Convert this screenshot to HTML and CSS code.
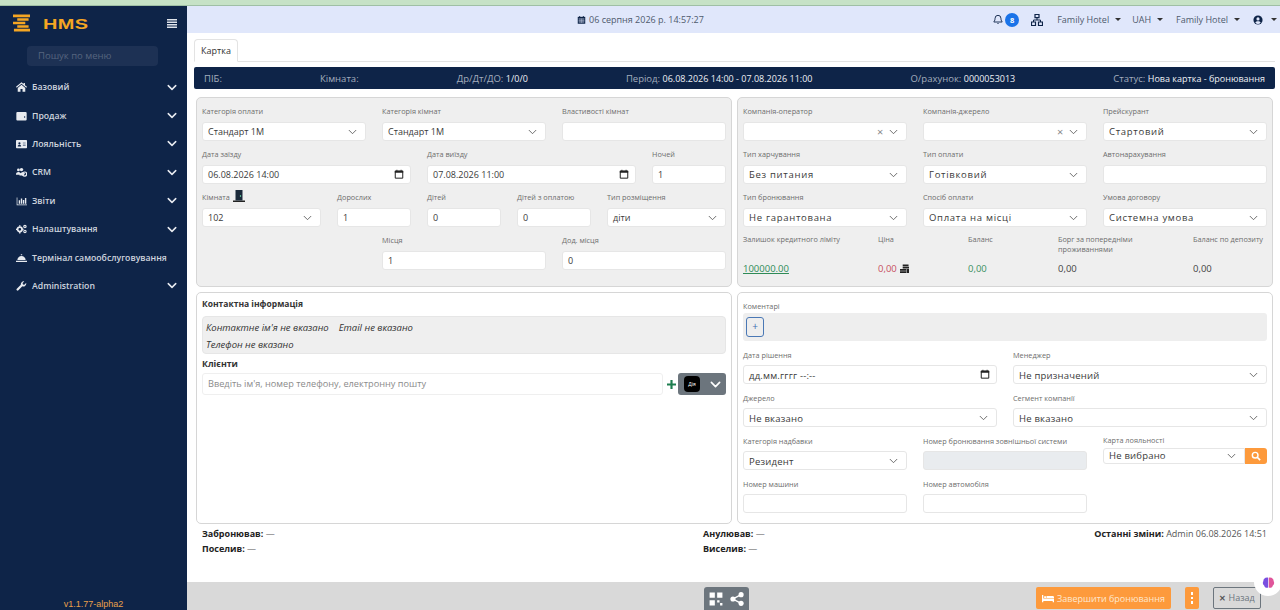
FILE: index.html
```html
<!DOCTYPE html>
<html lang="uk">
<head>
<meta charset="utf-8">
<title>HMS</title>
<link rel="stylesheet" href="styles.css">
</head>
<body>
<svg class="defs" width="0" height="0" aria-hidden="true">
  <symbol id="chev" viewBox="0 0 16 10"><path d="M2 2l6 6 6-6" fill="none" stroke="currentColor" stroke-linecap="round" stroke-linejoin="round"/></symbol>
  <symbol id="cal" viewBox="0 0 12 12"><path d="M1.500 2.500h9v8.500h-9z" fill="none" stroke="currentColor" stroke-width="1.200"/><path d="M1 2h10v2.500H1zM3 1h1v2H3zM8 1h1v2H8z" fill="currentColor"/></symbol>
</svg>
<div class="strip"></div>
<div class="app">
  <aside class="side">
    <div class="brand">
      <svg class="brand-mark" viewBox="0 0 18 19"><path d="M0 .5h18v3H0zM4.500 4.500h12v2.500h-12zM0 8.200h13v2.600H0zM4.500 12h12v2.500h-12zM1 15.500h17v3H1z" fill="#f5a623"/></svg>
      <span class="brand-name">HMS</span>
      <svg class="burger" viewBox="0 0 10 9"><path d="M0 0h10v1.500H0zM0 2.500h10V4H0zM0 5h10v1.500H0zM0 7.500h10V9H0z" fill="#dfe3ea"/></svg>
    </div>
    <div class="menu-search">Пошук по меню</div>
    <nav class="nav">
      <a class="nav-item"><svg class="nav-ic" viewBox="0 0 16 14"><path d="M8 0L0 6.800l1 1.200L8 2.200 15 8l1-1.200-3-2.500V1h-2v1.600zM2.500 8.500V14h4V10h3v4h4V8.500L8 3.800z" fill="currentColor"/></svg><span>Базовий</span><svg class="nav-chev"><use href="#chev"/></svg></a>
      <a class="nav-item"><svg class="nav-ic" viewBox="0 0 16 14"><path d="M2 1h12a1.500 1.500 0 0 1 1.500 1.500V12a1.500 1.500 0 0 1-1.500 1.500H2A1.500 1.500 0 0 1 .5 12V2.500A1.500 1.500 0 0 1 2 1z" fill="currentColor"/><circle cx="12.500" cy="8.500" r="1" fill="#0e2448"/></svg><span>Продаж</span><svg class="nav-chev"><use href="#chev"/></svg></a>
      <a class="nav-item"><svg class="nav-ic" viewBox="0 0 16 14"><path d="M1 1h14a1 1 0 0 1 1 1v10a1 1 0 0 1-1 1H1a1 1 0 0 1-1-1V2a1 1 0 0 1 1-1z" fill="currentColor"/><circle cx="5" cy="6" r="1.600" fill="#0e2448"/><path d="M2.500 10.500c0-3 5-3 5 0zM10 5h4v1h-4zM10 8h4v1h-4z" fill="#0e2448"/></svg><span>Лояльність</span><svg class="nav-chev"><use href="#chev"/></svg></a>
      <a class="nav-item"><svg class="nav-ic" viewBox="0 0 16 14"><circle cx="3.500" cy="4" r="2" fill="currentColor"/><circle cx="8" cy="3.500" r="2.500" fill="currentColor"/><path d="M0 10c0-3.500 5-4 6-2v3H0zM5 12c0-5 7-6 8-3l-2 3z" fill="currentColor"/><circle cx="12.500" cy="10" r="3" fill="none" stroke="currentColor" stroke-width="1.800"/></svg><span>CRM</span><svg class="nav-chev"><use href="#chev"/></svg></a>
      <a class="nav-item"><svg class="nav-ic" viewBox="0 0 16 14"><path d="M1 2h1v10h14v1.200H1zM4 6h2v5H4zM7 3.500h2V11H7zM10 5.500h2V11h-2zM13 2.500h2V11h-2z" fill="currentColor"/></svg><span>Звіти</span><svg class="nav-chev"><use href="#chev"/></svg></a>
      <a class="nav-item"><svg class="nav-ic" viewBox="0 0 16 14"><circle cx="5.500" cy="7.500" r="3.300" fill="none" stroke="currentColor" stroke-width="2.600"/><path d="M4.500 1.500h2v2h-2zM4.500 11.500h2v2h-2zM0 6.500h2v2H0zM9 6.500h2v2H9z" fill="currentColor"/><circle cx="13" cy="3.500" r="1.700" fill="none" stroke="currentColor" stroke-width="1.700"/><circle cx="13" cy="10.500" r="1.700" fill="none" stroke="currentColor" stroke-width="1.700"/></svg><span>Налаштування</span><svg class="nav-chev"><use href="#chev"/></svg></a>
      <a class="nav-item"><svg class="nav-ic" viewBox="0 0 16 14"><path d="M7 1.500h2V3H7zM2 10a6 6 0 0 1 12 0zM0 11h16v1.800H0z" fill="currentColor"/></svg><span>Термінал самообслуговування</span></a>
      <a class="nav-item"><svg class="nav-ic" viewBox="0 0 16 14"><path d="M15 3.500a4.300 4.300 0 0 1-5.800 4L3.500 13.200a1.600 1.600 0 0 1-2.300-2.300L7 5.200A4.300 4.300 0 0 1 12 .3L9.600 2.700l.5 2 2 .5L14.600 2.700a4 4 0 0 1 .4.800z" fill="currentColor"/></svg><span>Administration</span><svg class="nav-chev"><use href="#chev"/></svg></a>
    </nav>
    <div class="version">v1.1.77-alpha2</div>
  </aside>

  <main class="main">
    <header class="topbar">
      <div class="clock"><svg class="ic-cal" viewBox="0 0 12 12"><path d="M1 1.800h10V11H1z" fill="#0e2448"/><path d="M3 .5h1.200v2H3zM7.800.5H9v2H7.800z" fill="#0e2448"/><path d="M2 4.500h8M2 6.500h8M2 8.500h8M4 4v6M6 4v6M8 4v6" stroke="#e0e7fb" stroke-width=".6"/></svg>06 серпня 2026 р. 14:57:27</div>
      <div class="top-right">
        <svg class="ic-bell" viewBox="0 0 12 12"><path d="M6 1a3.500 3.500 0 0 0-3.500 3.500c0 3-1.500 4-1.500 4.500h10c0-.5-1.500-1.500-1.500-4.500A3.500 3.500 0 0 0 6 1z" fill="none" stroke="#0e2448" stroke-width="1.100"/><path d="M4.700 10.200a1.400 1.400 0 0 0 2.600 0z" fill="#0e2448"/></svg>
        <span class="badge">8</span>
        <svg class="ic-net" viewBox="0 0 12 12"><path d="M4 .5h4v3.200H4zM.5 8h4v3.500h-4zM7.500 8h4v3.500h-4z" fill="none" stroke="#0e2448" stroke-width="1.200"/><path d="M6 3.700V6M2.500 8V6h7v2" fill="none" stroke="#0e2448"/></svg>
        <span class="top-item caret first">Family Hotel</span>
        <span class="top-item caret uah">UAH</span>
        <span class="top-item caret">Family Hotel</span>
        <span class="top-user caret"><svg class="ic-user" viewBox="0 0 12 12"><circle cx="6" cy="6" r="5.500" fill="#0e2448"/><circle cx="6" cy="4.700" r="1.900" fill="#e0e7fb"/><path d="M2.800 9.300c1-2.300 5.400-2.300 6.400 0a4.500 4.500 0 0 1-6.400 0z" fill="#e0e7fb"/></svg></span>
      </div>
    </header>

    <div class="tabs"><span class="tab">Картка</span></div>

    <div class="summary">
      <span>ПІБ:</span>
      <span>Кімната:</span>
      <span>Др/Дт/ДО: <b>1/0/0</b></span>
      <span>Період: <b>06.08.2026 14:00 - 07.08.2026 11:00</b></span>
      <span>О/рахунок: <b>0000053013</b></span>
      <span>Статус: <b>Нова картка - бронювання</b></span>
    </div>

    <div class="panels">
      <section class="panel gray form-grid stay">
        <div class="field s4"><label>Категорія оплати</label><div class="ctl">Стандарт 1М<svg class="chev"><use href="#chev"/></svg></div></div>
        <div class="field s4"><label>Категорія кімнат</label><div class="ctl">Стандарт 1М<svg class="chev"><use href="#chev"/></svg></div></div>
        <div class="field s4"><label>Властивості кімнат</label><div class="ctl"></div></div>
        <div class="field s5"><label>Дата заїзду</label><div class="ctl">06.08.2026 14:00<svg class="cal"><use href="#cal"/></svg></div></div>
        <div class="field s5"><label>Дата виїзду</label><div class="ctl">07.08.2026 11:00<svg class="cal"><use href="#cal"/></svg></div></div>
        <div class="field s2"><label>Ночей</label><div class="ctl">1</div></div>
        <div class="field s3"><label>Кімната <svg class="door" viewBox="0 0 12 12"><path d="M0 10.500h12V12H0z" fill="#222"/><path d="M2.500 0h7v10.500h-7z" fill="#1b2a3a"/><circle cx="7.500" cy="6" r=".7" fill="#7fb"/></svg></label><div class="ctl">102<svg class="chev"><use href="#chev"/></svg></div></div>
        <div class="field s2"><label>Дорослих</label><div class="ctl">1</div></div>
        <div class="field s2"><label>Дітей</label><div class="ctl">0</div></div>
        <div class="field s2"><label>Дітей з оплатою</label><div class="ctl">0</div></div>
        <div class="field s3"><label>Тип розміщення</label><div class="ctl">діти<svg class="chev"><use href="#chev"/></svg></div></div>
        <div class="field s4 start5"><label>Місця</label><div class="ctl">1</div></div>
        <div class="field s4"><label>Дод. місця</label><div class="ctl">0</div></div>
      </section>

      <section class="panel gray form-grid terms">
        <div class="field s4"><label>Компанія-оператор</label><div class="ctl"><span class="clear">×</span><svg class="chev"><use href="#chev"/></svg></div></div>
        <div class="field s4"><label>Компанія-джерело</label><div class="ctl"><span class="clear">×</span><svg class="chev"><use href="#chev"/></svg></div></div>
        <div class="field s4"><label>Прейскурант</label><div class="ctl">Стартовий<svg class="chev"><use href="#chev"/></svg></div></div>
        <div class="field s4"><label>Тип харчування</label><div class="ctl">Без питания<svg class="chev"><use href="#chev"/></svg></div></div>
        <div class="field s4"><label>Тип оплати</label><div class="ctl">Готівковий<svg class="chev"><use href="#chev"/></svg></div></div>
        <div class="field s4"><label>Автонарахування</label><div class="ctl"></div></div>
        <div class="field s4"><label>Тип бронювання</label><div class="ctl">Не гарантована<svg class="chev"><use href="#chev"/></svg></div></div>
        <div class="field s4"><label>Спосіб оплати</label><div class="ctl">Оплата на місці<svg class="chev"><use href="#chev"/></svg></div></div>
        <div class="field s4"><label>Умова договору</label><div class="ctl">Системна умова<svg class="chev"><use href="#chev"/></svg></div></div>
        <div class="info s3"><label>Залишок кредитного ліміту</label><a class="val link">100000.00</a></div>
        <div class="info s2"><label>Ціна</label><span class="val red">0,00 <svg class="coins" viewBox="0 0 10 10"><path d="M3 .5h6.500v2H3zM3 3h7v2H3zM0 5.500h7v2H0zM0 8h7v2H0zM7.500 5.500H10V10H7.500z" fill="#222"/></svg></span></div>
        <div class="info s2"><label>Баланс</label><span class="val green">0,00</span></div>
        <div class="info s3"><label>Борг за попередніми проживаннями</label><span class="val">0,00</span></div>
        <div class="info s2"><label>Баланс по депозиту</label><span class="val">0,00</span></div>
      </section>

      <section class="panel contact">
        <h3 class="contact-title">Контактна інформація</h3>
        <div class="contact-box">
          <div class="contact-row"><span>Контактне ім'я не вказано</span><span>Email не вказано</span></div>
          <div class="contact-row"><span>Телефон не вказано</span></div>
        </div>
        <h3 class="clients-title">Клієнти</h3>
        <div class="client-row">
          <div class="client-input">Введіть ім'я, номер телефону, електронну пошту</div>
          <svg class="plus" viewBox="0 0 10 10"><path d="M3.800 0h2.400v3.800H10v2.400H6.200V10H3.800V6.200H0V3.800h3.800z" fill="#1e7e50"/></svg>
          <div class="diia"><span class="diia-logo">Дія</span><svg class="diia-chev"><use href="#chev"/></svg></div>
        </div>
      </section>

      <section class="panel extra">
        <label class="comment-label">Коментарі</label>
        <div class="comment-box"><span class="add">+</span></div>
        <div class="form-grid">
          <div class="field s6"><label>Дата рішення</label><div class="ctl">дд.мм.гггг --:--<svg class="cal"><use href="#cal"/></svg></div></div>
          <div class="field s6"><label>Менеджер</label><div class="ctl">Не призначений<svg class="chev"><use href="#chev"/></svg></div></div>
          <div class="field s6"><label>Джерело</label><div class="ctl">Не вказано<svg class="chev"><use href="#chev"/></svg></div></div>
          <div class="field s6"><label>Сегмент компанії</label><div class="ctl">Не вказано<svg class="chev"><use href="#chev"/></svg></div></div>
          <div class="field s4"><label>Категорія надбавки</label><div class="ctl">Резидент<svg class="chev"><use href="#chev"/></svg></div></div>
          <div class="field s4"><label>Номер бронювання зовнішньої системи</label><div class="ctl disabled"></div></div>
          <div class="field s4"><label class="short">Карта лояльності</label>
            <div class="loyal"><div class="ctl thin">Не вибрано<svg class="chev"><use href="#chev"/></svg></div><span class="search-btn"><svg viewBox="0 0 12 12"><circle cx="5" cy="5" r="3.400" fill="none" stroke="#fff" stroke-width="1.700"/><path d="M7.500 7.500l3.500 3.500" stroke="#fff" stroke-width="2"/></svg></span></div>
          </div>
          <div class="field s4"><label>Номер машини</label><div class="ctl"></div></div>
          <div class="field s4"><label>Номер автомобіля</label><div class="ctl"></div></div>
        </div>
      </section>
    </div>

    <div class="audit">
      <div class="audit-col first"><p><b>Забронював:</b> —</p><p><b>Поселив:</b> —</p></div>
      <div class="audit-col"><p><b>Анулював:</b> —</p><p><b>Виселив:</b> —</p></div>
      <div class="audit-col last"><p><b>Останні зміни:</b> Admin 06.08.2026 14:51</p></div>
    </div>

    <footer class="bottom">
      <div class="tools">
        <svg viewBox="0 0 12 12"><path d="M.5.500H5V5H.5zM7 .5h4.500V5H7zM.5 7H5v4.500H.5zM7 7h2v2H7zM9.500 9.500h2v2h-2z" fill="#fff"/></svg>
        <svg viewBox="0 0 12 12"><circle cx="9.500" cy="2.300" r="2.200" fill="#fff"/><circle cx="2.500" cy="6" r="2.200" fill="#fff"/><circle cx="9.500" cy="9.700" r="2.200" fill="#fff"/><path d="M9.500 2.300L2.500 6l7 3.700" fill="none" stroke="#fff" stroke-width="1.200"/></svg>
      </div>
      <span class="finish"><svg viewBox="0 0 14 10"><path d="M0 1h1.500v4H14v4.500h-1.500V8h-11v1.500H0zM2.500 2.500H5v2H2.500zM5.500 2h7A1.500 1.500 0 0 1 14 3.500v1H5.500z" fill="#fff"/></svg>Завершити бронювання</span>
      <span class="kebab"><i></i><i></i><i></i></span>
      <span class="back"><b>✕</b> Назад</span>
    </footer>
  </main>
</div>
<div class="brain"><svg viewBox="0 0 12 12"><path d="M5.700 1.500C3 .8 1 3 1.300 4.500.3 6 .8 8 2 8.700c.3 1.800 2.300 2.600 3.700 1.800z" fill="#7a4fe0"/><path d="M6.300 1.500c2.700-.7 4.700 1.500 4.400 3 1 1.500.5 3.500-.7 4.200-.3 1.800-2.300 2.600-3.700 1.800z" fill="#e0559a"/></svg></div>
</body>
</html>
```
FILE: styles.css
```css
* { box-sizing: border-box; }
html, body { margin: 0; padding: 0; height: 100%; overflow: hidden; }
body {
  font-family: "Open Sans", "Liberation Sans", sans-serif;
  font-size: 10px;
  color: #333;
  background: #fff;
  display: flex;
  flex-direction: column;
}
.defs { position: absolute; }
.strip { height: 6px; background: #c6e2c6; border-bottom: 1px solid #9fbfa5; flex: none; }
.app { flex: 1; display: flex; min-height: 0; }

/* sidebar */
.side { width: 187px; flex: none; background: #0e2448; color: #d4d9e2; display: flex; flex-direction: column; }
.brand { display: flex; align-items: center; height: 34px; padding-left: 13px; }
.brand-mark { width: 17px; height: 18px; }
.brand-name { margin-left: 13px; font-family: "Liberation Sans", sans-serif; font-weight: 700; font-size: 15px; color: #f5a623; width: 60px; letter-spacing: .3px; transform: scaleX(1.33); transform-origin: left center; }
.burger { width: 10px; height: 9px; margin-left: auto; margin-right: 10px; }
.menu-search { margin: 6px 29px 0 27px; height: 20px; border-radius: 4px; background: #1d3154; color: #56657f; font-size: 9.500px; line-height: 20px; padding-left: 11px; }
.nav { margin-top: 7px; display: flex; flex-direction: column; }
.nav-item { height: 28.400px; display: flex; align-items: center; padding-left: 16px; font-size: 8.700px; color: #cfd5df; font-weight: 600; white-space: nowrap; }
.nav-ic { width: 11px; height: 10px; margin-right: 5px; color: #e8ebf0; flex: none; }
.nav-chev { width: 10px; height: 7px; margin-left: auto; margin-right: 10px; color: #e8ebf0; stroke-width: 2.400; }
.version { margin-top: auto; text-align: center; font-family: "Liberation Sans", sans-serif; color: #eaa04b; font-size: 9px; line-height: 12px; }

/* main column */
.main { flex: 1; min-width: 0; display: flex; flex-direction: column; }
.topbar { height: 27px; background: #e0e7fb; display: flex; align-items: center; flex: none; color: #4e5a6d; font-size: 9px; }
.clock { margin-left: 390px; display: flex; align-items: center; gap: 3px; }
.ic-cal { width: 9px; height: 10px; }
.top-right { margin-left: auto; display: flex; align-items: center; padding-right: 3px; }
.ic-bell { width: 10px; height: 11px; }
.badge { margin-left: 2px; width: 14px; height: 14px; border-radius: 50%; background: #1a73e8; color: #fff; font-size: 7.500px; font-weight: 700; line-height: 14px; text-align: center; }
.ic-net { width: 12px; height: 12px; margin-left: 12px; }
.top-item { margin-left: 13px; }
.top-item.first { margin-left: 14px; }
.top-item.uah { margin-left: 11px; }
.caret { display: inline-flex; align-items: center; }
.caret::after { content: ""; margin-left: 6px; border-top: 3.500px solid #333; border-left: 3px solid transparent; border-right: 3px solid transparent; }
.top-user { margin-left: 13px; }
.ic-user { width: 10px; height: 10px; }
.top-user::after { margin-left: 8px; }

.tabs { margin: 6px 5px 0 7px; height: 23px; border-bottom: 1px solid #e3e3e3; flex: none; }
.tab { display: inline-block; height: 23px; width: 44px; border: 1px solid #e3e3e3; border-bottom-color: #fff; border-radius: 4px 4px 0 0; background: #fff; text-align: center; line-height: 22px; font-size: 9px; color: #333; }

.summary { margin: 5px 5px 0 7px; height: 22px; border-radius: 2px; background: #0e2448; color: #a3adbd; display: flex; justify-content: space-between; align-items: center; padding: 0 10px; font-size: 9.500px; flex: none; }
.summary b { font-weight: 500; font-size: 9px; color: #eef1f5; }

.panels { margin: 8px 7px 0 9px; display: grid; grid-template-columns: 536px 536px; grid-template-rows: 190px 232px; gap: 5px; flex: none; }
.panel { border: 1px solid #d6d6d6; border-radius: 5px; padding: 6px 5px; background: #fff; }
.panel.gray { background: #efefef; }
.form-grid { display: grid; grid-template-columns: repeat(12, 29px); column-gap: 16px; row-gap: 6px; align-content: start; }
.s2 { grid-column: span 2; }
.s3 { grid-column: span 3; }
.s4 { grid-column: span 4; }
.s5 { grid-column: span 5; }
.s6 { grid-column: span 6; }
.start5 { grid-column: 5 / span 4; }
.field { min-width: 0; }
label { display: block; height: 18px; line-height: 14px; font-size: 7.300px; color: #6d6d6d; white-space: nowrap; }
.door { width: 12px; height: 12px; vertical-align: -2px; margin-left: 1px; }
.ctl { position: relative; height: 19px; background: #fff; border: 1px solid #e6e6e6; border-radius: 3px; padding: 0 5px; font-size: 9.500px; line-height: 18px; color: #3a3a3a; letter-spacing: .2px; white-space: nowrap; }
.stay .ctl { font-size: 9px; letter-spacing: 0; }
.terms .ctl { letter-spacing: .7px; }
.chev { position: absolute; right: 8px; top: 6px; width: 9px; height: 6px; color: #555; stroke-width: 1.500; }
.cal { position: absolute; right: 6px; top: 3px; width: 10px; height: 10px; color: #222; }
.clear { position: absolute; right: 22px; top: 0; color: #888; font-size: 11px; }
.info { display: flex; flex-direction: column; min-width: 0; }
.info label { height: 29px; line-height: 10px; white-space: normal; padding-top: 1px; }
.val { font-size: 9.500px; line-height: 14px; color: #444; }
.val.link { color: #2e8b57; text-decoration: underline; }
.val.red { color: #c8505f; }
.val.green { color: #3c8f63; }
.coins { width: 9px; height: 9px; margin-left: 1px; vertical-align: -1px; }

/* contact */
.contact { padding-top: 5px; }
.contact-title, .clients-title { margin: 0; font-weight: 700; color: #333; }
.contact-title { height: 18px; line-height: 12px; font-size: 8.500px; }
.contact-box { height: 38px; background: #efefef; border: 1px solid #e6e6e6; border-radius: 4px; padding: 2px 3px; font-style: italic; font-size: 9.500px; color: #333; }
.contact-row { height: 17px; line-height: 17px; display: flex; gap: 10px; }
.clients-title { height: 19px; line-height: 20px; font-size: 8.800px; }
.client-row { display: flex; align-items: center; }
.client-input { width: 461px; height: 22px; border: 1px solid #efefef; border-radius: 3px; line-height: 20px; padding-left: 5px; font-size: 9.200px; color: #8b8b8b; }
.plus { width: 9px; height: 9px; margin-left: 4px; }
.diia { margin-left: 2px; width: 48px; height: 22px; background: #6c757d; border-radius: 3px; display: flex; align-items: center; padding-left: 6px; }
.diia-logo { width: 16px; height: 16px; background: #000; border-radius: 4px; color: #fff; font-size: 5px; line-height: 16px; text-align: center; }
.diia-chev { width: 11px; height: 7px; margin-left: auto; margin-right: 5px; color: #fff; stroke-width: 2.400; }

/* extra */
.comment-label { height: 14px; line-height: 14px; }
.comment-box { height: 28px; background: #eee; border-radius: 3px; padding: 4px 3px; margin-bottom: 6px; }
.add { display: block; width: 18px; height: 20px; border: 1px solid #4a78b5; border-radius: 3px; color: #3e6fb0; text-align: center; line-height: 17px; font-size: 10px; }
.extra .field label { line-height: 16px; }
.extra .ctl { line-height: 19px; }
.disabled { background: #e9ecef; }
.extra .field .short { height: 15px; line-height: 14px; }
.loyal { display: flex; }
.extra .ctl.thin { flex: 1; height: 16px; line-height: 14px; border-radius: 3px 0 0 3px; }
.ctl.thin .chev { top: 4px; right: 8px; }
.search-btn { width: 22px; height: 16px; background: #fd9a3c; border-radius: 0 3px 3px 0; display: flex; align-items: center; justify-content: center; }
.search-btn svg { width: 10px; height: 10px; }

/* audit */
.audit { display: flex; padding: 2px 13px 0 15px; font-size: 9px; color: #555; flex: none; }
.audit p { margin: 0; height: 15px; line-height: 15px; white-space: nowrap; }
.audit b { color: #222; font-weight: 700; }
.audit-col.first { width: 501px; }
.audit-col.last { margin-left: auto; text-align: right; }

/* bottom */
.bottom { margin-top: auto; height: 28px; background: #d9d9d9; display: flex; align-items: flex-end; padding: 0 19px 0 517px; flex: none; font-size: 9px; }
.tools { width: 45px; height: 23px; background: #6c757d; border-radius: 3px 3px 0 0; display: flex; align-items: center; gap: 7px; padding-left: 5px; }
.tools svg { width: 14px; height: 14px; }
.finish { margin-left: auto; width: 135px; height: 22px; margin-bottom: 1px; background: #fd9a3c; border-radius: 2px; color: #fde8d0; display: flex; align-items: center; justify-content: center; gap: 3px; font-size: 9px; white-space: nowrap; }
.finish svg { width: 12px; height: 9px; flex: none; }
.kebab { margin-left: 14px; width: 14px; height: 22px; margin-bottom: 1px; background: #fd9a3c; border-radius: 2px; display: flex; flex-direction: column; align-items: center; justify-content: center; gap: 2px; }
.kebab i { width: 2.500px; height: 2.500px; background: #fff; }
.back { margin-left: 14px; width: 48px; height: 22px; margin-bottom: 1px; border: 1px solid #6c757d; border-radius: 2px; color: #6c757d; text-align: center; line-height: 20px; font-size: 9px; }
.back b { color: #555; font-size: 8px; }

.brain { position: fixed; left: 1254px; top: 568px; width: 28px; height: 28px; border-radius: 50%; background: #fff; display: flex; align-items: center; justify-content: center; }
.brain svg { width: 13px; height: 13px; }
```
